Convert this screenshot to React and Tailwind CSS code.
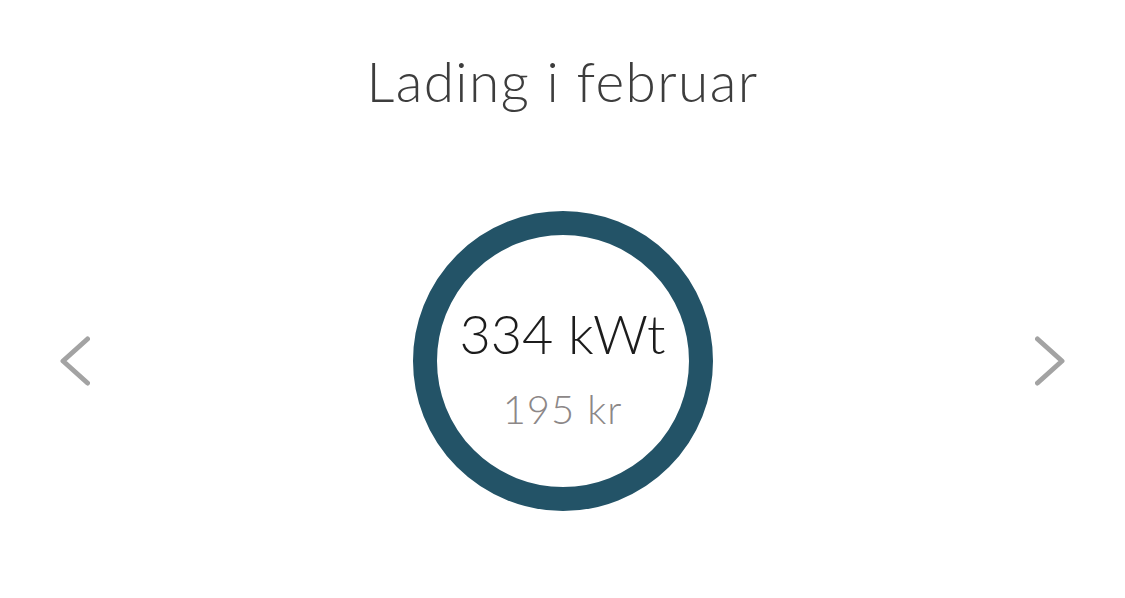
export default function App() {
  return (
    <div
      className="w-full h-[598px] bg-white flex flex-col"
      style={{ fontFamily: "Lato, 'Noto Sans', sans-serif" }}
    >
      {/* header */}
      <h1 className="pt-[48px] text-center text-[55px] leading-[66px] font-light tracking-[1.4px] text-[#3d3d3d]">
        Lading i februar
      </h1>

      {/* month summary */}
      <div className="mt-[97px] flex items-center justify-between px-[60px]">
        <button className="w-[30px] h-[50px]" aria-label="Forrige måned">
          <svg viewBox="0 0 30 50" className="w-[30px] h-[50px]">
            <polyline points="27.5,3 3,25 27.5,47" fill="none" stroke="#a3a3a3" strokeWidth="5" strokeLinecap="round" strokeLinejoin="round" />
          </svg>
        </button>

        <div className="w-[300px] h-[300px] rounded-full border-[24px] border-[#235367] flex flex-col items-center pt-[66px]">
          <div className="text-[54px] leading-[65px] font-light text-[#1c1c1c]">334 kWt</div>
          <div className="mt-[19px] text-[40px] leading-[48px] font-light tracking-[1px] text-[#8c8787]">195 kr</div>
        </div>

        <button className="w-[30px] h-[50px]" aria-label="Neste måned">
          <svg viewBox="0 0 30 50" className="w-[30px] h-[50px]">
            <polyline points="2.5,3 27,25 2.5,47" fill="none" stroke="#a3a3a3" strokeWidth="5" strokeLinecap="round" strokeLinejoin="round" />
          </svg>
        </button>
      </div>
    </div>
  );
}
